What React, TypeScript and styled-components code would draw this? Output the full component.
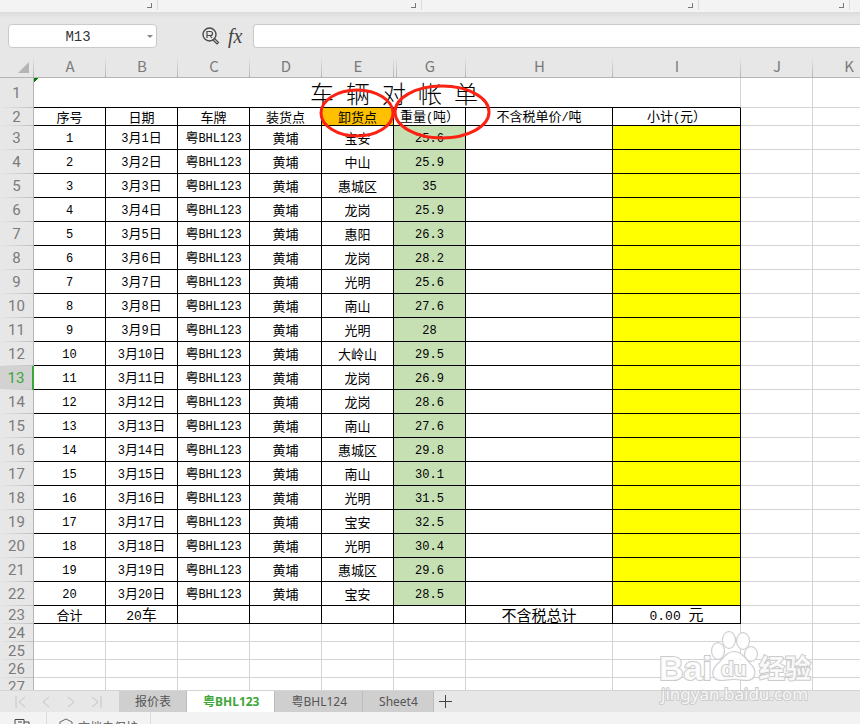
import React, { useState } from "react";
import styled, { createGlobalStyle } from "styled-components";

const GlobalStyle = createGlobalStyle`
  * {
    box-sizing: border-box;
  }
  body {
    margin: 0;
    background: #e7e7e7;
    font-family: "Noto Sans CJK SC", sans-serif;
  }
  button, input {
    font: inherit;
    border: none;
    padding: 0;
    background: none;
  }
`;

const Page = styled.div`
  display: flex;
  flex-direction: column;
  height: 100vh;
  overflow: hidden;
`;

// 功能区底部
const Ribbon = styled.div`
  display: flex;
  flex: none;
  height: 12px;
  background: #f3f3f3;
`;

const RibbonGroup = styled.div<{ $width: number }>`
  display: flex;
  justify-content: flex-end;
  width: ${(p) => p.$width}px;
  height: 10px;
  padding: 3px 5px 2px 0;
  border-right: 1px solid #dcdcdc;
`;

const Launcher = styled.button`
  width: 5px;
  height: 5px;
  border-right: 1px solid #777;
  border-bottom: 1px solid #777;
`;

// 编辑栏
const FormulaBar = styled.div`
  display: flex;
  flex: none;
  height: 45px;
  padding: 12px 0 9px 8px;
  background: linear-gradient(#dcdcdc, #e7e7e7 6px);
`;

const NameBox = styled.div`
  display: flex;
  align-items: center;
  width: 149px;
  height: 24px;
  padding-right: 3px;
  background: #fff;
  border: 1px solid #cacaca;
  border-radius: 4px;
  > input {
    flex: 1;
    min-width: 0;
    padding-top: 2px;
    text-align: center;
    color: #333;
    font: 14px/20px "Liberation Mono", monospace;
  }
`;

const Arrow = styled.button`
  width: 0;
  height: 0;
  border-left: 3px solid transparent;
  border-right: 3px solid transparent;
  border-top: 3px solid #888;
`;

const Tools = styled.div`
  display: flex;
  align-items: center;
  gap: 8px;
  width: 96px;
  height: 24px;
  padding-left: 45px;
  > button {
    height: 20px;
    color: #444;
  }
  svg {
    display: block;
  }
`;

const Fx = styled.button`
  font-family: "Liberation Serif", serif;
  font-style: italic;
  font-size: 20px;
  line-height: 18px;
`;

const FormulaInput = styled.input`
  flex: 1;
  height: 24px;
  padding: 0 8px;
  background: #fff;
  border: 1px solid #cacaca;
  border-right: none;
  border-radius: 4px 0 0 4px;
`;

// 表格
const Sheet = styled.div`
  flex: 1;
  min-height: 0;
  overflow: hidden;
  background: #fff;
`;

const Table = styled.table`
  width: 100%;
  table-layout: fixed;
  border-collapse: separate;
  border-spacing: 0;
`;

const Row = styled.tr<{ $height: number }>`
  height: ${(p) => p.$height}px;
`;

const Corner = styled.th`
  padding: 0 5px 4px 0;
  vertical-align: bottom;
  background: linear-gradient(#e7e7e7, #b4b4b4) right / 1px 100% no-repeat #e7e7e7;
  border-bottom: 1px solid #b4b4b4;
  > svg {
    display: block;
    margin-left: auto;
  }
`;

const ColHead = styled.th<{ $afterHidden?: boolean }>`
  padding: 0 0 2px;
  color: #7b7b7b;
  font-size: 15px;
  font-weight: 400;
  line-height: 16px;
  background:
    linear-gradient(#e7e7e7, #b4b4b4) right / 1px 100% no-repeat,
    linear-gradient(#e7e7e7, #b4b4b4) 2px 0 / ${(p) => (p.$afterHidden ? 1 : 0)}px 100% no-repeat,
    #e7e7e7;
  border-bottom: 1px solid #b4b4b4;
`;

const RowHead = styled.th<{ $active?: boolean }>`
  padding: 0 0 1px;
  color: ${(p) => (p.$active ? "#3da639" : "#7b7b7b")};
  font-family: Roboto, sans-serif;
  font-size: 15px;
  font-weight: 400;
  line-height: 16px;
  background:
    linear-gradient(90deg, #e7e7e7, #c0c0c0) bottom / 100% 1px no-repeat,
    ${(p) => (p.$active ? "#d2d2d2" : "#e7e7e7")};
  border-right: ${(p) => (p.$active ? "2px solid #3da639" : "1px solid #b4b4b4")};
`;

const Cell = styled.td<{ $fill?: string; $large?: boolean }>`
  position: relative;
  padding: 0;
  text-align: center;
  white-space: nowrap;
  color: #000;
  background: ${(p) => p.$fill || "#fff"};
  font-size: ${(p) => (p.$large ? 15 : 13)}px;
  line-height: 14px;
  border-right: 1px solid #000;
  border-bottom: 1px solid #000;
`;

const TitleCell = styled(Cell)`
  padding: 4px 0 0 14px;
  font-size: 24px;
  font-family: "Liberation Serif", "Noto Sans CJK SC", serif;
  font-weight: 300;
  line-height: 24px;
  border-right-color: #d4d4d4;
  background: linear-gradient(135deg, #008000 3px, #fff 3px);
`;

const Blank = styled.td`
  padding: 0;
  border-right: 1px solid #d4d4d4;
  border-bottom: 1px solid #d4d4d4;
`;

const Latin = styled.span<{ $large?: boolean }>`
  font-family: "Liberation Mono", monospace;
  font-size: ${(p) => (p.$large ? 13 : 12)}px;
  line-height: 1;
`;

const Circle = styled.svg`
  position: absolute;
  z-index: 1;
  top: -20px;
  left: -2px;
  overflow: visible;
  pointer-events: none;
`;

const Watermark = styled.svg`
  position: absolute;
  z-index: 2;
  right: 46px;
  bottom: 4px;
  pointer-events: none;
`;

// 工作表标签
const TabBar = styled.div`
  position: relative;
  display: flex;
  flex: none;
  height: 22px;
  background: #e7e7e7;
  border-top: 1px solid #d4d4d4;
`;

const TabNav = styled.div`
  display: flex;
  align-items: center;
  justify-content: space-between;
  width: 119px;
  padding: 0 16px 0 15px;
  svg {
    display: block;
  }
`;

const Tab = styled.button<{ $active: boolean }>`
  padding: 0 15px 0 16px;
  color: ${(p) => (p.$active ? "#3da639" : "#555")};
  font-family: "Noto Sans", "Noto Sans CJK SC", sans-serif;
  font-size: 12px;
  font-weight: ${(p) => (p.$active ? 700 : 400)};
  line-height: 20px;
  background: ${(p) => (p.$active ? "#fff" : "#cfcfcf")};
  border-right: 1px solid #bdbdbd;
`;

const AddTab = styled.button`
  width: 24px;
  padding-left: 5px;
  svg {
    display: block;
  }
`;

const StatusBar = styled.div`
  display: flex;
  flex: none;
  align-items: flex-start;
  height: 12px;
  overflow: hidden;
  background: #f3f3f3;
  color: #555;
  font-size: 12px;
  line-height: 18px;
`;

const StatusItem = styled.div`
  display: flex;
  gap: 5px;
  padding: 6px 12px 0 12px;
  border-right: 1px solid #dcdcdc;
  > svg {
    flex: none;
  }
`;

const columns = [
  { name: "A", width: 72 },
  { name: "B", width: 72 },
  { name: "C", width: 72 },
  { name: "D", width: 72 },
  { name: "E", width: 72 },
  { name: "G", width: 72 },
  { name: "H", width: 147 },
  { name: "I", width: 128 },
  { name: "J", width: 72 },
  { name: "K", width: 72 },
];

const records: [string, string][] = [
  ["宝安", "25.6"],
  ["中山", "25.9"],
  ["惠城区", "35"],
  ["龙岗", "25.9"],
  ["惠阳", "26.3"],
  ["龙岗", "28.2"],
  ["光明", "25.6"],
  ["南山", "27.6"],
  ["光明", "28"],
  ["大岭山", "29.5"],
  ["龙岗", "26.9"],
  ["龙岗", "28.6"],
  ["南山", "27.6"],
  ["惠城区", "29.8"],
  ["南山", "30.1"],
  ["光明", "31.5"],
  ["宝安", "32.5"],
  ["光明", "30.4"],
  ["惠城区", "29.6"],
  ["宝安", "28.5"],
];

const sheets = ["报价表", "粤BHL123", "粤BHL124", "Sheet4"];

const navPaths = ["M1 0V12M10 1L4 6L10 11", "M8 1L2 6L8 11", "M2 1L8 6L2 11", "M0 1L6 6L0 11M9 0V12"];

// 数字和字母用等宽字体
function Mixed({ text, large }: { text: string; large?: boolean }) {
  return (
    <>
      {text.split(/([\x20-\x7e]+)/).map((part, i) =>
        i % 2 ? (
          <Latin key={i} $large={large}>
            {part}
          </Latin>
        ) : (
          part
        )
      )}
    </>
  );
}

function Grid() {
  return (
    <Table>
      <colgroup>
        <col style={{ width: 34 }} />
        {columns.map((c) => (
          <col key={c.name} style={{ width: c.width }} />
        ))}
        <col />
      </colgroup>
      <thead>
        <Row $height={21}>
          <Corner>
            <svg width="11" height="11">
              <path d="M11 0V11H0Z" fill="#b4b4b4" />
            </svg>
          </Corner>
          {columns.map((c) => (
            <ColHead key={c.name} $afterHidden={c.name === "G"}>
              {c.name}
            </ColHead>
          ))}
          <ColHead />
        </Row>
      </thead>
      <tbody>
        <Row $height={30}>
          <RowHead>1</RowHead>
          <TitleCell colSpan={8}>
            {["车", "辆", "对", "帐", "单"].join("\u00a0\u00a0")}
          </TitleCell>
          <Blank />
          <Blank />
          <Blank />
        </Row>
        <Row $height={18}>
          <RowHead>2</RowHead>
          <Cell>序号</Cell>
          <Cell>日期</Cell>
          <Cell>车牌</Cell>
          <Cell>装货点</Cell>
          <Cell $fill="#ffc000">
            卸货点
            <Circle width="76" height="50">
              <ellipse cx="37" cy="25" rx="36" ry="23" fill="none" stroke="#fb2214" strokeWidth="3" />
            </Circle>
          </Cell>
          <Cell>
            <Mixed text="重量(吨）" />
            <Circle width="100" height="58">
              <ellipse cx="50" cy="24" rx="47" ry="26" fill="none" stroke="#fb2214" strokeWidth="3" />
            </Circle>
          </Cell>
          <Cell>
            <Mixed text="不含税单价/吨" />
          </Cell>
          <Cell>
            <Mixed text="小计(元）" />
          </Cell>
          <Blank />
          <Blank />
          <Blank />
        </Row>
        {records.map(([place, weight], i) => (
          <Row key={i} $height={24}>
            <RowHead $active={i === 10}>{i + 3}</RowHead>
            <Cell>
              <Mixed text={`${i + 1}`} />
            </Cell>
            <Cell>
              <Mixed text={`3月${i + 1}日`} />
            </Cell>
            <Cell>
              <Mixed text="粤BHL123" />
            </Cell>
            <Cell>黄埔</Cell>
            <Cell>{place}</Cell>
            <Cell $fill="#c6e0b4">
              <Mixed text={weight} />
            </Cell>
            <Cell />
            <Cell $fill="#ffff00" />
            <Blank />
            <Blank />
            <Blank />
          </Row>
        ))}
        <Row $height={18}>
          <RowHead>23</RowHead>
          <Cell>合计</Cell>
          <Cell $large>
            <Mixed text="20车" large />
          </Cell>
          <Cell />
          <Cell />
          <Cell />
          <Cell />
          <Cell $large>不含税总计</Cell>
          <Cell $large>
            <Mixed text="0.00 元" large />
          </Cell>
          <Blank />
          <Blank />
          <Blank />
        </Row>
        {[24, 25, 26, 27].map((n) => (
          <Row key={n} $height={18}>
            <RowHead>{n}</RowHead>
            {columns.map((c) => (
              <Blank key={c.name} />
            ))}
            <Blank />
          </Row>
        ))}
      </tbody>
    </Table>
  );
}

function Logo() {
  return (
    <Watermark width="160" height="78" viewBox="0 0 160 78">
      <g
        fill="#fff"
        fillOpacity="0.85"
        stroke="#cccccc"
        strokeWidth="2"
        paintOrder="stroke"
        fontFamily='"Liberation Sans", "Noto Sans CJK SC", sans-serif'
        fontWeight="700"
      >
        <text x="5" y="50" fontSize="34">
          Bai
        </text>
        <ellipse cx="64" cy="21" rx="6" ry="8" />
        <ellipse cx="75" cy="10" rx="6" ry="8" />
        <ellipse cx="89" cy="11" rx="6" ry="8" />
        <ellipse cx="97" cy="24" rx="6" ry="7" />
        <path d="M80 22C88 22 92 30 97 35C103 41 101 50 93 50C88 50 85 49 80 49C75 49 72 50 67 50C58 50 57 41 63 35C69 30 72 22 80 22Z" />
        <text x="67" y="46" fontSize="21">
          du
        </text>
        <text x="105" y="48" fontSize="26">
          经验
        </text>
        <text
          x="7"
          y="70"
          fontSize="17"
          fontWeight="400"
          fontFamily='"Noto Sans", sans-serif'
        >
          jingyan.baidu.com
        </text>
      </g>
    </Watermark>
  );
}

function App() {
  const [sheet, setSheet] = useState("粤BHL123");
  const [cellName, setCellName] = useState("M13");

  return (
    <Page>
      <GlobalStyle />
      <Ribbon>
        {[158, 264, 277, 151].map((width) => (
          <RibbonGroup key={width} $width={width}>
            <Launcher aria-label="更多" />
          </RibbonGroup>
        ))}
      </Ribbon>
      <FormulaBar>
        <NameBox>
          <input
            aria-label="名称框"
            value={cellName}
            onChange={(e) => setCellName(e.target.value)}
          />
          <Arrow aria-label="名称列表" />
        </NameBox>
        <Tools>
          <button aria-label="查找">
            <svg width="18" height="18" viewBox="0 0 18 18" fill="none" stroke="#4a4a4a">
              <circle cx="7.500" cy="7.500" r="6.500" strokeWidth="1.400" />
              <path d="M5 11V4.500H8.500A2 2 0 0 1 8.500 8.500H5M8 8.500L10 11" strokeWidth="1.200" />
              <path d="M12 11L16.500 15.500L15 17L11 13" strokeWidth="1.200" />
            </svg>
          </button>
          <Fx aria-label="插入函数">fx</Fx>
        </Tools>
        <FormulaInput aria-label="编辑栏" />
      </FormulaBar>
      <Sheet>
        <Grid />
      </Sheet>
      <TabBar>
        <TabNav>
          {navPaths.map((d) => (
            <button key={d} aria-label="切换工作表">
              <svg width="11" height="12" fill="none" stroke="#c4c4c4">
                <path d={d} />
              </svg>
            </button>
          ))}
        </TabNav>
        {sheets.map((name) => (
          <Tab key={name} $active={name === sheet} onClick={() => setSheet(name)}>
            {name}
          </Tab>
        ))}
        <AddTab aria-label="新建工作表">
          <svg width="14" height="14" stroke="#444">
            <path d="M0 6.500H13M6.500 0V13" />
          </svg>
        </AddTab>
        <Logo />
      </TabBar>
      <StatusBar>
        <StatusItem>
          <svg width="22" height="14" fill="none" stroke="#444">
            <path d="M3 14V1.500H12V14M6 4H10M12 4H17V14M15 7H19V14" />
          </svg>
        </StatusItem>
        <StatusItem>
          <svg width="14" height="16" fill="none" stroke="#666">
            <path d="M7 1L13 4V12L7 15L1 12V4ZM4 6V8M10 6V8" />
          </svg>
          文档未保护
        </StatusItem>
      </StatusBar>
    </Page>
  );
}

export default App;
